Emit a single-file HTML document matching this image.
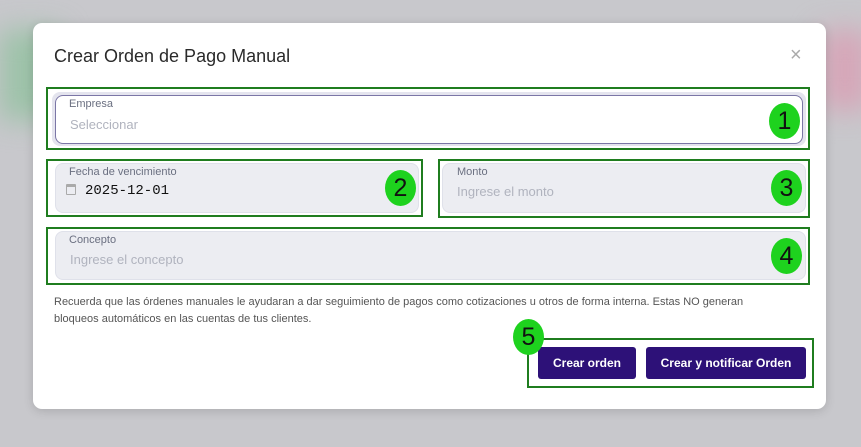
<!DOCTYPE html>
<html><head><style>
*{box-sizing:border-box;margin:0;padding:0}
body{width:861px;height:447px;overflow:hidden;background:#c8c8cc;font-family:"Liberation Sans",sans-serif;position:relative}
.blob{position:absolute;filter:blur(14px)}
.modal{position:absolute;left:33px;top:23px;width:793px;height:386px;background:#fff;border-radius:9px;box-shadow:0 2px 10px rgba(0,0,0,.15)}
.abs{position:absolute}
.title{left:54px;top:46px;font-size:18px;color:#2a2a2a}
.close{left:790px;top:44px;font-size:20px;color:#aaa;font-weight:300}
.gb{position:absolute;border:2px solid #1f7d1f}
.inp{position:absolute;background:#ecedf2;border:1px solid #dfe1ea;border-radius:8px}
.lbl{position:absolute;font-size:11px;color:#6a6f80}
.ph{position:absolute;font-size:13px;color:#b0b3be}
.badge{position:absolute;width:31px;height:36px;border-radius:50%;background:#1ed21e;color:#111;font-size:25px;text-align:center;line-height:36px}
.note{left:54px;top:294px;font-size:11px;color:#555;line-height:17px;width:725px}
.btn{position:absolute;background:#2d1178;color:#fff;font-size:12px;font-weight:bold;border-radius:3px;text-align:center;line-height:32px;top:347px;height:32px}
</style></head><body>
<div class="blob" style="left:0;top:30px;width:60px;height:90px;background:#9cc2a8"></div>
<div class="blob" style="left:820px;top:30px;width:50px;height:80px;background:#d6a6b8"></div>
<div class="modal"></div>
<div class="abs title">Crear Orden de Pago Manual</div>
<div class="abs close">×</div>

<div class="gb" style="left:46px;top:87px;width:764px;height:63px"></div>
<div class="inp" style="left:52px;top:92px;width:754px;height:54px;background:#e4e4ee;border:none"></div>
<div class="inp" style="left:55px;top:95px;width:748px;height:49px;background:#fff;border:1px solid #7b76a6"></div>
<div class="lbl" style="left:69px;top:98px">Empresa</div>
<div class="ph" style="left:70px;top:117px">Seleccionar</div>
<div class="badge" style="left:769px;top:103px">1</div>

<div class="gb" style="left:46px;top:159px;width:377px;height:58px"></div>
<div class="inp" style="left:55px;top:163px;width:364px;height:50px"></div>
<div class="lbl" style="left:69px;top:166px">Fecha de vencimiento</div>
<div class="abs" style="left:66px;top:184px;width:10px;height:11px;border:1px solid #aaa;border-top-width:3px;border-radius:1px"></div>
<div class="abs" style="left:85px;top:183px;font-family:'Liberation Mono',monospace;font-size:14px;color:#111">2025-12-01</div>
<div class="badge" style="left:385px;top:170px">2</div>

<div class="gb" style="left:438px;top:159px;width:372px;height:59px"></div>
<div class="inp" style="left:442px;top:163px;width:364px;height:50px"></div>
<div class="lbl" style="left:457px;top:166px">Monto</div>
<div class="ph" style="left:457px;top:184px">Ingrese el monto</div>
<div class="badge" style="left:771px;top:170px">3</div>

<div class="gb" style="left:46px;top:227px;width:764px;height:58px"></div>
<div class="inp" style="left:55px;top:231px;width:751px;height:49px"></div>
<div class="lbl" style="left:69px;top:234px">Concepto</div>
<div class="ph" style="left:70px;top:252px">Ingrese el concepto</div>
<div class="badge" style="left:771px;top:238px">4</div>

<div class="abs note">Recuerda que las órdenes manuales le ayudaran a dar seguimiento de pagos como cotizaciones u otros de forma interna. Estas NO generan bloqueos automáticos en las cuentas de tus clientes.</div>

<div class="gb" style="left:527px;top:338px;width:287px;height:50px"></div>
<div class="btn" style="left:538px;width:98px">Crear orden</div>
<div class="btn" style="left:646px;width:160px">Crear y notificar Orden</div>
<div class="badge" style="left:513px;top:319px">5</div>
</body></html>
